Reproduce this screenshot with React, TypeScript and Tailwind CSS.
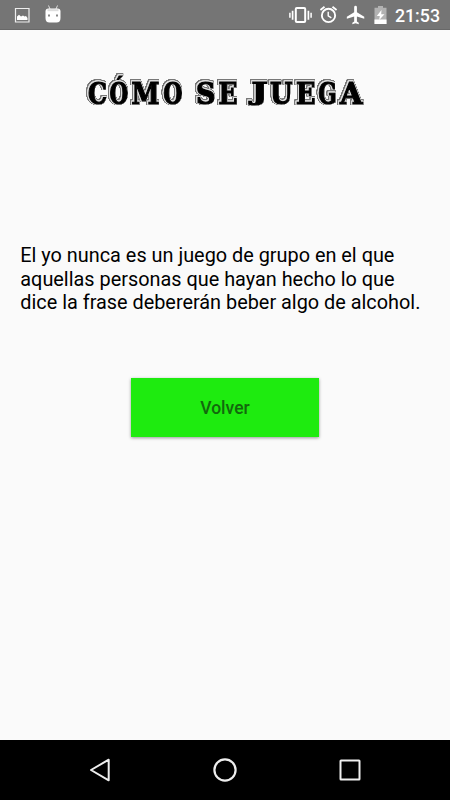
const titleGlyphs = [
  { char: "C", x: 88, width: 19 },
  { char: "Ó", x: 109.5, width: 18.8 },
  { char: "M", x: 131.5, width: 28 },
  { char: "O", x: 163.3, width: 19.2 },
  { char: " ", x: 184, width: 10 },
  { char: "S", x: 196, width: 19.5 },
  { char: "E", x: 218.5, width: 19 },
  { char: " ", x: 238, width: 10 },
  { char: "J", x: 251.5, width: 16 },
  { char: "U", x: 270, width: 22.5 },
  { char: "E", x: 296, width: 19.5 },
  { char: "G", x: 318.3, width: 18.5 },
  { char: "A", x: 340, width: 22.5 },
]

function StatusBar() {
  return (
    <header className="flex h-[30px] shrink-0 items-center border-b border-[#686868] bg-[#757575] text-white">
      <svg className="ml-[14px] size-4" viewBox="0 0 16 16" fill="none">
        <path d="M1.5 1.5h13.5v13.5H1.5z" stroke="#eee" strokeWidth="1.2" />
        <path d="M3 13V9.5l2-1.7 2 1.7 2-.9 1.5 1 1.5-.5 1.5 2V13z" fill="#fff" />
      </svg>
      <svg className="ml-[14px] h-5 w-[18px]" viewBox="0 0 18 20" fill="none">
        <path d="M4.5 .5 6 4M13.5 .5 12 4" stroke="#ddd" strokeWidth="1" />
        <path d="M1.5 6.5q0-3 3-3h9q3 0 3 3V13q0 4.5-4 4.5h-7q-4 0-4-4.5z" fill="#fff" />
        <path d="M3.5 5.2h11" stroke="#ddd" strokeWidth="2" />
        <path d="M4 9.5h2v2H4zM12 9.5h2v2h-2z" fill="#888" />
      </svg>
      <div className="flex-1" />
      <svg className="h-[22px] w-[23px]" viewBox="0 0 23 22" fill="none" stroke="#fff">
        <rect x="6.8" y="4" width="9.4" height="14" rx="1" strokeWidth="2" />
        <path d="M3.6 6.8v9M19.4 6.8v9" strokeWidth="1.7" />
        <path d="M.9 8.8v5M22.1 8.8v5" strokeWidth="1.5" />
      </svg>
      <svg className="ml-[7px] mr-px size-[19px]" viewBox="0 0 20 20" fill="none" stroke="#fff">
        <circle cx="10" cy="11" r="7" strokeWidth="2" />
        <path d="M1.5 5.3 5.8 1.9M18.5 5.3l-4.3-3.4" strokeWidth="1.9" />
        <path d="M9.7 7V11.5l3.3 2" strokeWidth="1.5" />
      </svg>
      <svg className="ml-[6px] mr-px size-[22px]" viewBox="0 0 24 24" fill="#fff">
        <path d="M21 16v-2l-8-5V3.5a1.5 1.5 0 0 0-3 0V9l-8 5v2l8-2.5V19l-2 1.5V22l3.5-1 3.5 1v-1.5L13 19v-5.5z" />
      </svg>
      <svg className="ml-[6px] h-[18px] w-[13px]" viewBox="0 0 12 18">
        <path d="M0 1.8h3.5V0h5v1.8H12V18H0z" fill="#b2b2b2" />
        <path d="M0 13.5h12V18H0z" fill="#fff" />
        <path d="M7 4 2.3 10h3L4.7 14 10 8.3H6.7z" fill="#fff" />
      </svg>
      <span className="ml-[8px] mr-[10px] pt-[2px] font-[Roboto,sans-serif] text-[17.8px] font-medium leading-5">
        21:53
      </span>
    </header>
  )
}

function Title() {
  return (
    <svg className="h-[50px] w-[450px] shrink-0" viewBox="0 64 450 50">
      {/* Heavy letters with a pale inline and a grey rim close around it */}
      <text
        className="font-['DejaVu_Serif',serif] text-[30px] font-bold [filter:drop-shadow(0.6px_0_0_#ddd)_drop-shadow(-0.6px_0_0_#ddd)_drop-shadow(0_0.5px_0_#ddd)_drop-shadow(0_-0.5px_0_#ddd)_drop-shadow(0.6px_0_0_#777)_drop-shadow(-0.6px_0_0_#777)_drop-shadow(0_0.6px_0_#777)_drop-shadow(0_-0.6px_0_#777)]"
        y="104"
        fill="#000"
        stroke="#000"
        strokeWidth="1.2"
      >
        {titleGlyphs.map((glyph) => (
          <tspan
            key={glyph.x}
            x={glyph.x}
            y={glyph.char === "J" ? 99.5 : 104}
            className={glyph.char === "J" ? "text-[23.5px]" : "text-[30px]"}
            textLength={glyph.width}
            lengthAdjust="spacingAndGlyphs"
          >
            {glyph.char}
          </tspan>
        ))}
      </text>
    </svg>
  )
}

function NavigationBar() {
  return (
    <nav className="flex h-[60px] shrink-0 items-center justify-between bg-black px-[87px]">
      <svg className="size-[26px]" viewBox="0 0 26 26" fill="none" stroke="#eee" strokeWidth="2">
        <path d="M4 13 21.7 2.7v20.6z" strokeLinejoin="round" />
      </svg>
      <svg className="size-[26px]" viewBox="0 0 26 26" fill="none" stroke="#eee" strokeWidth="2.2">
        <circle cx="13" cy="13" r="10.6" />
      </svg>
      <svg className="size-[26px]" viewBox="0 0 26 26" fill="none" stroke="#eee" strokeWidth="2">
        <rect x="3.5" y="3.5" width="19" height="19" rx="0.5" />
      </svg>
    </nav>
  )
}

export default function App() {
  return (
    <div className="flex h-[800px] w-[450px] flex-col overflow-hidden bg-[#fafafa] font-[Roboto,sans-serif]">
      <StatusBar />
      <main className="flex flex-1 flex-col items-center pt-[34px]">
        <Title />
        <p className="mt-[130px] w-full whitespace-nowrap pl-[20.3px] text-[19.88px] leading-[23.7px] text-black">
          El yo nunca es un juego de grupo en el que
          <br />
          aquellas personas que hayan hecho lo que
          <br />
          dice la frase debererán beber algo de alcohol.
        </p>
        <button className="mt-[62.4px] h-[59.4px] w-[188px] bg-[#1eeb0f] pt-0.5 text-[17.5px] font-medium text-[#13680d] shadow-[0_1px_3px_rgba(0,0,0,0.4)]">
          Volver
        </button>
      </main>
      <NavigationBar />
    </div>
  )
}
